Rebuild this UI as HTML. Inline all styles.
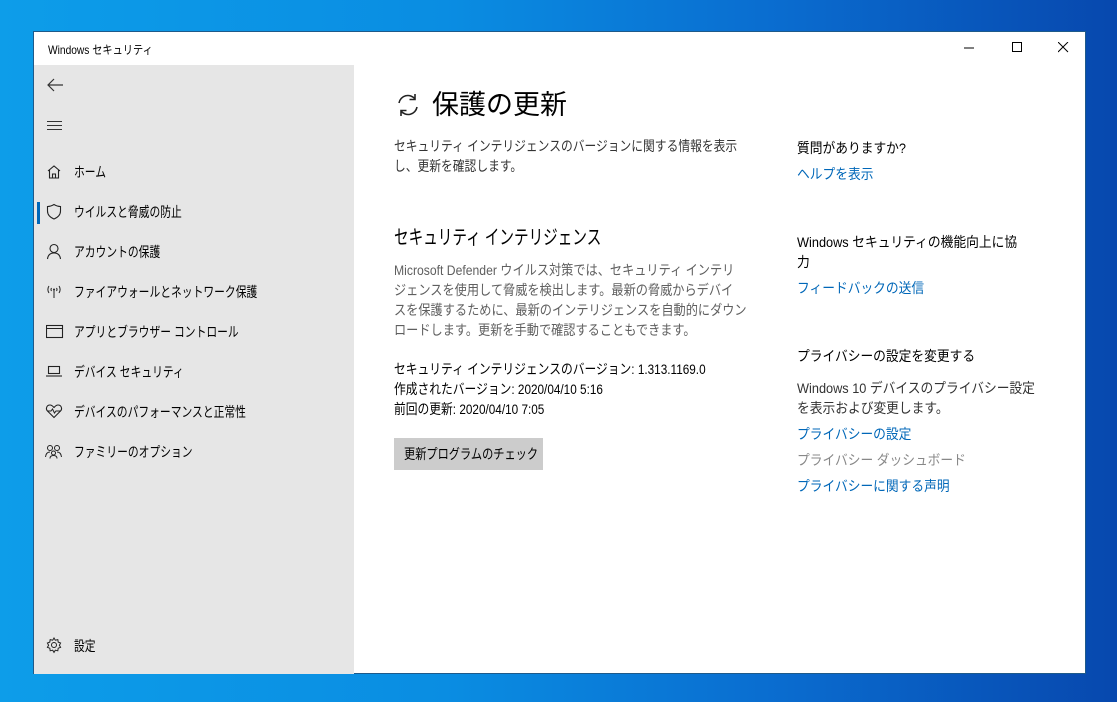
<!DOCTYPE html>
<html><head><meta charset="utf-8"><style>
*{margin:0;padding:0;box-sizing:border-box}
body{width:1117px;height:702px;overflow:hidden;position:relative;font-family:"Liberation Sans","Noto Sans CJK JP",sans-serif;background:linear-gradient(90deg,#0d9de9 0%,#0a8de2 40%,#0a6ccf 70%,#0748ae 100%);color:#000}
.win{position:absolute;left:33px;top:31px;width:1053px;height:643px;background:#fff;border:1px solid #1e5a8a}
.title{position:absolute;left:14px;top:9px;font-size:12px;transform:scaleX(0.85);transform-origin:left;white-space:nowrap}
.side{position:absolute;left:0;top:33px;width:320px;height:609px;background:#e6e6e6}
.t{position:absolute;white-space:nowrap;font-size:14px;line-height:20px;transform-origin:left top}
.nav{left:40px;transform:scaleX(0.77)}
.r{transform:scaleX(0.91)}
.blue{color:#0067b8}
.gray{color:#5f5f5f}
svg{position:absolute}
</style></head><body>
<div class="win">
<div class="title">Windows セキュリティ</div>
<svg style="left:930px;top:11px" width="10" height="10"><line x1="0" y1="5" x2="10" y2="5" stroke="#000"/></svg>
<svg style="left:978px;top:10px" width="11" height="11"><rect x="0.5" y="0.5" width="9" height="9" fill="none" stroke="#000"/></svg>
<svg style="left:1024px;top:10px" width="11" height="11"><path d="M0 0L10 10M10 0L0 10" stroke="#000"/></svg>
<div class="side">
<svg style="left:12px;top:12px" width="18" height="16"><path d="M17 8H2M8 2L2 8L8 14" fill="none" stroke="#333" stroke-width="1.2"/></svg>
<svg style="left:13px;top:55px" width="16" height="12"><path d="M0 1.5H15M0 5.5H15M0 9.5H15" stroke="#333" stroke-width="1.1"/></svg>
<div style="position:absolute;left:3px;top:137px;width:3px;height:22px;background:#0067b8"></div>
<svg style="left:12px;top:99px" width="16" height="16"><path d="M2 7L8 2L14 7M3.5 6V14H12.5V6M6.5 14V10H9.5V14" fill="none" stroke="#222" stroke-width="1.1"/></svg>
<svg style="left:12px;top:138px" width="16" height="18"><path d="M8 1.5C5.5 3 3.5 3.5 1.5 3.5V8C1.5 12 4.5 14.5 8 16C11.5 14.5 14.5 12 14.5 8V3.5C12.5 3.5 10.5 3 8 1.5Z" fill="none" stroke="#222" stroke-width="1.1"/></svg>
<svg style="left:12px;top:178px" width="16" height="18"><circle cx="8" cy="5.5" r="4" fill="none" stroke="#222" stroke-width="1.1"/><path d="M1.5 16C2 12 4.5 10 8 10C11.5 10 14 12 14.5 16" fill="none" stroke="#222" stroke-width="1.1"/></svg>
<svg style="left:11px;top:218px" width="18" height="16"><path d="M9 6V15M4 3C2.5 5 2.5 8 4 10M14 3C15.5 5 15.5 8 14 10M6.5 5C5.8 6 5.8 7 6.5 8M11.5 5C12.2 6 12.2 7 11.5 8" fill="none" stroke="#222" stroke-width="1"/><circle cx="9" cy="6.5" r="1" fill="#222"/></svg>
<svg style="left:12px;top:258px" width="18" height="16"><rect x="0.5" y="2.5" width="16" height="12" fill="none" stroke="#222" stroke-width="1.1"/><line x1="0.5" y1="5.5" x2="16.5" y2="5.5" stroke="#222"/></svg>
<svg style="left:12px;top:299px" width="18" height="14"><rect x="2.5" y="2.5" width="11" height="7" fill="none" stroke="#222" stroke-width="1.1"/><line x1="0" y1="12" x2="16" y2="12" stroke="#222" stroke-width="1.1"/></svg>
<svg style="left:11px;top:338px" width="18" height="16"><path d="M9 14.5L2.5 8C0.5 6 1.5 2 5 2C7 2 8 3.5 9 4.5C10 3.5 11 2 13 2C16.5 2 17.5 6 15.5 8Z" fill="none" stroke="#222" stroke-width="1.1"/><path d="M2 8H6L7.5 6L9.5 10L11 8H16" fill="none" stroke="#222" stroke-width="1"/></svg>
<svg style="left:11px;top:378px" width="18" height="16"><circle cx="5" cy="5" r="2.5" fill="none" stroke="#222"/><circle cx="12" cy="5" r="2.5" fill="none" stroke="#222"/><circle cx="8.5" cy="10" r="2" fill="none" stroke="#222"/><path d="M0.5 14C1 10 3 9 5 9M16.5 14C16 10 14 9 12 9M5 15.5C5 13.5 6.5 12.5 8.5 12.5C10.5 12.5 12 13.5 12 15.5" fill="none" stroke="#222"/></svg>
<svg style="left:12px;top:572px" width="18" height="18"><circle cx="8" cy="8" r="2.5" fill="none" stroke="#222"/><path d="M8 1L9.3 3.2L11.8 2.6L12.2 5.1L14.6 6L13.4 8.2L14.6 10.4L12.2 11.2L11.8 13.8L9.3 13.2L8 15.4L6.7 13.2L4.2 13.8L3.8 11.2L1.4 10.4L2.6 8.2L1.4 6L3.8 5.1L4.2 2.6L6.7 3.2Z" fill="none" stroke="#222"/></svg>
<div class="t nav" style="top:97px">ホーム</div>
<div class="t nav" style="top:137px">ウイルスと脅威の防止</div>
<div class="t nav" style="top:177px">アカウントの保護</div>
<div class="t nav" style="top:217px">ファイアウォールとネットワーク保護</div>
<div class="t nav" style="top:257px">アプリとブラウザー コントロール</div>
<div class="t nav" style="top:297px">デバイス セキュリティ</div>
<div class="t nav" style="top:337px">デバイスのパフォーマンスと正常性</div>
<div class="t nav" style="top:377px">ファミリーのオプション</div>
<div class="t nav" style="top:571px">設定</div>
</div>
<svg style="left:361px;top:60px" width="26" height="26"><path d="M4 11A9 9 0 0 1 20 7M22 15A9 9 0 0 1 6 19" fill="none" stroke="#222" stroke-width="1.6"/><path d="M20 2V7.5H14.5M6 24V18.5H11.5" fill="none" stroke="#222" stroke-width="1.6"/></svg>
<div class="t" style="left:398px;top:55px;font-size:27px;line-height:36px">保護の更新</div>
<div class="t" style="left:360px;top:104px;color:#333;transform:scaleX(0.84)">セキュリティ インテリジェンスのバージョンに関する情報を表示<br>し、更新を確認します。</div>
<div class="t" style="left:360px;top:193px;font-size:20px;line-height:26px;transform:scaleX(0.73)">セキュリティ インテリジェンス</div>
<div class="t gray" style="left:360px;top:228px;transform:scaleX(0.87)">Microsoft Defender ウイルス対策では、セキュリティ インテリ<br>ジェンスを使用して脅威を検出します。最新の脅威からデバイ<br>スを保護するために、最新のインテリジェンスを自動的にダウン<br>ロードします。更新を手動で確認することもできます。</div>
<div class="t" style="left:360px;top:327px;transform:scaleX(0.84)">セキュリティ インテリジェンスのバージョン: 1.313.1169.0<br>作成されたバージョン: 2020/04/10 5:16<br>前回の更新: 2020/04/10 7:05</div>
<div style="position:absolute;left:360px;top:406px;width:149px;height:32px;background:#cccccc"></div>
<div class="t" style="left:370px;top:412px;transform:scaleX(0.8)">更新プログラムのチェック</div>
<div class="t r" style="left:763px;top:106px">質問がありますか?</div>
<div class="t blue r" style="left:763px;top:132px">ヘルプを表示</div>
<div class="t r" style="left:763px;top:200px">Windows セキュリティの機能向上に協<br>力</div>
<div class="t blue r" style="left:763px;top:246px">フィードバックの送信</div>
<div class="t r" style="left:763px;top:314px">プライバシーの設定を変更する</div>
<div class="t r" style="left:763px;top:346px;color:#333">Windows 10 デバイスのプライバシー設定<br>を表示および変更します。</div>
<div class="t blue r" style="left:763px;top:392px">プライバシーの設定</div>
<div class="t r" style="left:763px;top:418px;color:#888">プライバシー ダッシュボード</div>
<div class="t blue r" style="left:763px;top:444px">プライバシーに関する声明</div>
</div>
</body></html>
